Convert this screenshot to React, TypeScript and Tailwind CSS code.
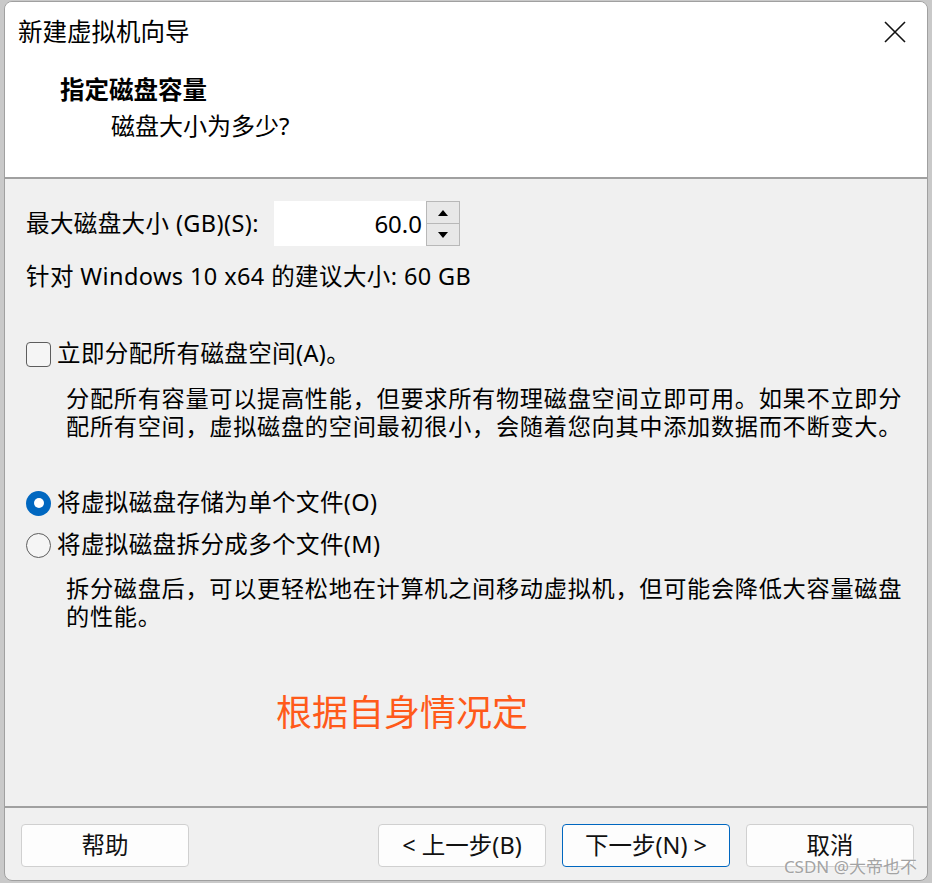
const font = { fontFamily: '"Noto Sans", "Noto Sans CJK SC", sans-serif' };

function Radio({ checked }: { checked?: boolean }) {
  return checked ? (
    <span className="flex h-[25px] w-[25px] shrink-0 items-center justify-center rounded-full bg-[#0067c0]">
      <span className="h-[10px] w-[10px] rounded-full bg-white" />
    </span>
  ) : (
    <span className="h-[25px] w-[25px] shrink-0 rounded-full border border-[#5d5d5d] bg-[#f5f5f5]" />
  );
}

function Btn({ label, primary }: { label: string; primary?: boolean }) {
  return (
    <button
      className={
        "flex h-[43px] w-[168px] items-center justify-center rounded-[4px] border bg-[#fdfdfd] text-[23.5px] text-[#111]" +
        (primary ? " border-[#0067c0]" : " border-[#d0d0d0]")
      }
    >
      {label}
    </button>
  );
}

export default function App() {
  return (
    <div className="h-[883px] w-[932px] bg-[#c9c9c9] pl-[4px] pt-[1px]" style={font}>
      <div className="relative flex h-[880px] w-[924px] flex-col overflow-hidden rounded-[8px] border border-[#a0a0a0] bg-[#f0f0f0] text-black">
        {/* Title + header */}
        <div className="h-[175px] bg-white">
          <div className="flex h-[60px] items-center justify-between pl-[13px] pr-[21px]">
            <span className="text-[24.5px] leading-none">新建虚拟机向导</span>
            <svg width="22" height="22" viewBox="0 0 22 22">
              <path d="M1 1L21 21M21 1L1 21" stroke="#111" strokeWidth="1.6" />
            </svg>
          </div>
          <div className="pl-[55px] pt-[13px] text-[24.5px] font-bold leading-[30px]">指定磁盘容量</div>
          <div className="pl-[106px] pt-[6px] text-[24px] leading-[30px]">磁盘大小为多少?</div>
        </div>
        <div className="h-[2px] bg-[#a0a0a0]" />

        {/* Body */}
        <div className="flex flex-1 flex-col pl-[21px] text-[23.5px] tracking-[0.4px]">
          <div className="mt-[22px] flex h-[45px] items-center">
            <span className="w-[248px] whitespace-nowrap">最大磁盘大小 (GB)(S):</span>
            <div className="flex h-[45px] w-[152px] items-center justify-end bg-white pr-[4px] text-[24px] tracking-normal">60.0</div>
            <div className="flex h-[45px] w-[34px] flex-col border border-[#b8b8b8] bg-[#e8e8e8]">
              <div className="flex flex-1 items-center justify-center border-b border-[#b8b8b8]">
                <svg width="10" height="6" viewBox="0 0 10 6"><path d="M5 0L10 6H0z" fill="#000" /></svg>
              </div>
              <div className="flex flex-1 items-center justify-center">
                <svg width="10" height="6" viewBox="0 0 10 6"><path d="M0 0H10L5 6z" fill="#000" /></svg>
              </div>
            </div>
          </div>
          <div className="mt-[15px] leading-[30px]">针对 Windows 10 x64 的建议大小: 60 GB</div>

          <div className="mt-[48px] flex h-[30px] items-center gap-[6px]">
            <span className="h-[25px] w-[25px] shrink-0 rounded-[4px] border border-[#5d5d5d] bg-[#f5f5f5]" />
            <span>立即分配所有磁盘空间(A)。</span>
          </div>
          <div className="ml-[40px] mt-[15px] whitespace-nowrap text-[23.2px] leading-[28px] tracking-[0.7px]">
            分配所有容量可以提高性能，但要求所有物理磁盘空间立即可用。如果不立即分
            <br />
            配所有空间，虚拟磁盘的空间最初很小，会随着您向其中添加数据而不断变大。
          </div>

          <div className="mt-[48px] flex h-[30px] items-center gap-[6px]">
            <Radio checked />
            <span>将虚拟磁盘存储为单个文件(O)</span>
          </div>
          <div className="mt-[12px] flex h-[30px] items-center gap-[6px]">
            <Radio />
            <span>将虚拟磁盘拆分成多个文件(M)</span>
          </div>
          <div className="ml-[40px] mt-[14px] whitespace-nowrap text-[23.2px] leading-[28px] tracking-[0.7px]">
            拆分磁盘后，可以更轻松地在计算机之间移动虚拟机，但可能会降低大容量磁盘
            <br />
            的性能。
          </div>

          <div className="ml-[250px] mt-[63px] text-[36px] leading-[40px] tracking-normal text-[#ff5a1a]">根据自身情况定</div>
        </div>

        <div className="h-[2px] bg-[#a0a0a0]" />
        {/* Footer */}
        <div className="flex h-[72px] items-start justify-between pl-[16px] pr-[13px] pt-[16px]">
          <Btn label="帮助" />
          <div className="flex gap-[16px]">
            <Btn label="< 上一步(B)" />
            <Btn label="下一步(N) >" primary />
            <Btn label="取消" />
          </div>
        </div>

        <span
          className="absolute bottom-[5px] right-[10px] text-[17px] leading-none text-[#a3a3a3]"
          style={{ textShadow: "0 0 2px #fff" }}
        >
          CSDN @大帝也不
        </span>
      </div>
    </div>
  );
}
